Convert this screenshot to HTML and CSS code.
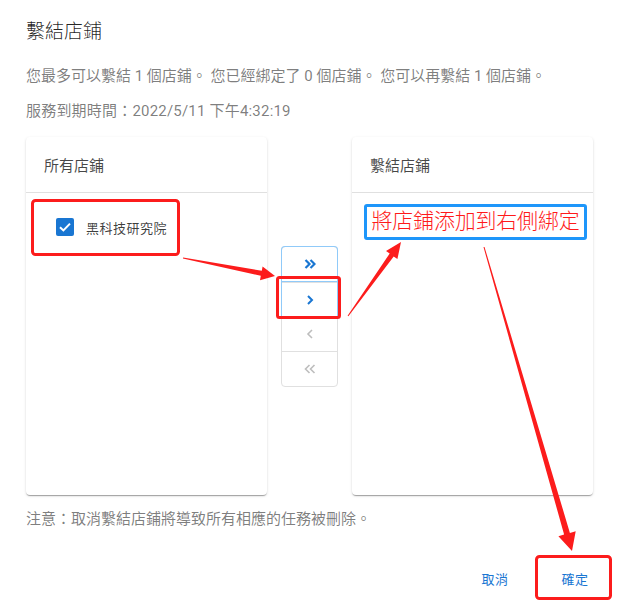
FILE: index.html
```html
<!DOCTYPE html>
<html lang="zh-Hant">
<head>
<meta charset="utf-8">
<link rel="stylesheet" href="styles.css">
</head>
<body>
<div class="dialog">
  <h2 class="title">繫結店鋪</h2>
  <p class="info first">您最多可以繫結 1 個店鋪。 您已經綁定了 0 個店鋪。 您可以再繫結 1 個店鋪。</p>
  <p class="info">服務到期時間：2022/5/11 下午4:32:19</p>

  <div class="transfer">
    <div class="card">
      <div class="card-head">所有店鋪</div>
      <div class="card-body">
        <label class="item">
          <span class="check"><svg width="18" height="18" viewBox="0 0 18 18"><path d="M4 9.2 L7.4 12.4 L14 5.6" fill="none" stroke="#fff" stroke-width="2"/></svg></span>
          <span class="item-text">黑科技研究院</span>
        </label>
      </div>
    </div>

    <div class="moves">
      <button class="mv active"><svg width="12" height="10" viewBox="0 0 12 10"><path d="M1.5 1 L5.5 5 L1.5 9 M6.5 1 L10.5 5 L6.5 9" fill="none" stroke="currentColor" stroke-width="2.2"/></svg></button>
      <button class="mv active"><svg width="8" height="10" viewBox="0 0 8 10"><path d="M2 1 L6 5 L2 9" fill="none" stroke="currentColor" stroke-width="2"/></svg></button>
      <button class="mv"><svg width="8" height="10" viewBox="0 0 8 10"><path d="M6 1 L2 5 L6 9" fill="none" stroke="currentColor" stroke-width="1.6"/></svg></button>
      <button class="mv"><svg width="12" height="10" viewBox="0 0 12 10"><path d="M5.5 1 L1.5 5 L5.5 9 M10.5 1 L6.5 5 L10.5 9" fill="none" stroke="currentColor" stroke-width="1.6"/></svg></button>
    </div>

    <div class="card">
      <div class="card-head">繫結店鋪</div>
      <div class="card-body right">
        <div class="hint">將店鋪添加到右側綁定</div>
      </div>
    </div>
  </div>

  <p class="note">注意：取消繫結店鋪將導致所有相應的任務被刪除。</p>

  <div class="actions">
    <button class="act">取消</button>
    <button class="act">確定</button>
  </div>
</div>

<svg class="marks" width="618" height="604" viewBox="0 0 618 604">
  <g fill="none" stroke="#fc1c1c" stroke-width="3">
    <rect x="32.5" y="200.5" width="146" height="54" rx="3"/>
    <rect x="277.5" y="277.5" width="62" height="40" rx="2"/>
    <rect x="536.5" y="556.5" width="74" height="42" rx="3"/>
  </g>
  <g fill="#fc1c1c">
    <polygon points="183.1,257.5 261.8,270.8 262.6,266.4 275,276 260.0,280.2 260.8,275.8 182.9,258.5"/>
    <polygon points="347.6,315.7 389.7,253.5 386.0,250.9 401,242 397.4,259.1 393.7,256.5 348.4,316.3"/>
    <polygon points="483.5,247.1 564.1,534.5 558.4,536.2 572,551 575.7,531.2 569.9,532.9 484.5,246.9"/>
  </g>
</svg>
</body>
</html>
```

FILE: styles.css
```css
* { box-sizing: border-box; }
html, body { margin: 0; padding: 0; background: #fff; }
body {
  font-family: Roboto, "Noto Sans CJK TC", sans-serif;
  width: 618px;
  height: 604px;
  overflow: hidden;
  position: relative;
}
.dialog { padding: 20px 0 0 26px; }
.title {
  margin: 0;
  font-size: 19px;
  line-height: 24px;
  font-weight: 300;
  color: rgba(0,0,0,0.87);
}
.info {
  margin: 15px 0 0;
  font-size: 15px;
  line-height: 20px;
  color: rgba(0,0,0,0.52);
}
.info + .info { letter-spacing: 0.2px; }
.info.first { margin-top: 22px; }
.transfer {
  display: flex;
  margin-top: 16px;
  height: 358px;
}
.card {
  width: 241px;
  background: #fff;
  border-radius: 4px;
  box-shadow: 0 2px 1px -1px rgba(0,0,0,.2), 0 1px 1px 0 rgba(0,0,0,.14), 0 1px 3px 0 rgba(0,0,0,.12);
  display: flex;
  flex-direction: column;
}
.card-head {
  height: 56px;
  border-bottom: 1px solid #e0e0e0;
  padding-left: 18px;
  display: flex;
  align-items: center;
  font-size: 15px;
  color: rgba(0,0,0,0.72);
}
.card-body { padding: 22px 0 0 30px; }
.card-body.right { padding: 11px 0 0 12px; }
.item { display: flex; align-items: center; height: 24px; }
.check {
  width: 18px; height: 18px;
  background: #1976d2;
  border-radius: 2px;
  display: flex;
}
.item-text {
  margin-left: 12px;
  font-size: 13px;
  letter-spacing: 0.5px;
  color: rgba(0,0,0,0.75);
}
.hint {
  width: 223px;
  height: 36px;
  border: 3px solid #1e96fa;
  border-radius: 3px;
  color: #ff1a1a;
  font-size: 21px;
  font-weight: 300;
  line-height: 29px;
  text-align: center;
  white-space: nowrap;
  letter-spacing: -0.2px;
}
.moves {
  margin: 109px 14px 0 14px;
  width: 57px;
  align-self: flex-start;
  display: flex;
  flex-direction: column;
  border: 1px solid #e0e0e0;
  border-radius: 4px;
}
.mv {
  height: 34.75px;
  border: 0;
  border-top: 1px solid #e0e0e0;
  background: transparent;
  color: #bdbdbd;
  display: flex;
  align-items: center;
  justify-content: center;
  padding: 0;
}
.mv:first-child { border-top: 0; }
.mv.active { color: #1976d2; }
.moves .mv.active { box-shadow: 0 0 0 1px #90caf9; position: relative; }
.moves .mv:first-child { border-radius: 3px 3px 0 0; }
.note {
  margin: 14px 0 0 0;
  font-size: 15px;
  line-height: 20px;
  color: rgba(0,0,0,0.52);
}
.actions {
  display: flex;
  justify-content: flex-end;
  gap: 16px;
  padding-right: 11px;
  margin-top: 31px;
}
.act {
  min-width: 64px;
  height: 36px;
  border: 0;
  background: transparent;
  color: #1976d2;
  font-family: Roboto, "Noto Sans CJK TC", sans-serif;
  font-size: 13px;
  letter-spacing: 0.5px;
  padding: 0 8px;
}
.marks {
  position: absolute;
  left: 0; top: 0;
  pointer-events: none;
}
```
